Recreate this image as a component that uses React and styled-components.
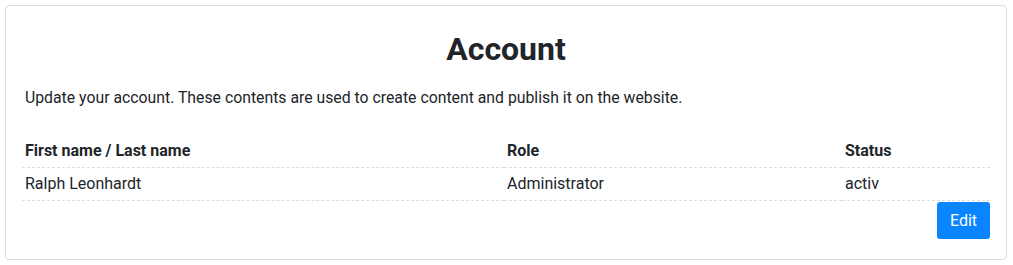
import React from 'react'
import styled, { createGlobalStyle } from 'styled-components'

const GlobalStyle = createGlobalStyle`
  body {
    margin: 0;
    background: #fff;
    font-family: Roboto, "Liberation Sans", sans-serif;
    color: #212529;
  }
`

const Page = styled.div`
  padding: 5px 6px 5px 5px;
`

const Card = styled.div`
  border: 1px solid #dcdcdc;
  border-radius: 4px;
  padding: 16px 16px 20px 16px;
  display: flex;
  flex-direction: column;
`

const Title = styled.h1`
  margin: 8px 0 0;
  text-align: center;
  font-size: 32px;
  font-weight: 700;
  line-height: 38px;
  color: #212529;
`

const Lead = styled.p`
  margin: 18px 0 0 3px;
  font-size: 15.8px;
  line-height: 24px;
`

const Table = styled.table`
  margin-top: 25px;
  width: 100%;
  border-collapse: collapse;
  table-layout: fixed;
  font-size: 16px;
`

const Th = styled.th`
  text-align: left;
  font-weight: 700;
  padding: 7px 3px;
  line-height: 18px;
  border-bottom: 1px dashed #dedede;
  width: ${p => p.$w || 'auto'};
`

const Td = styled.td`
  padding: 7px 3px;
  line-height: 18px;
  border-bottom: 1px dashed #dedede;
`

const Actions = styled.div`
  display: flex;
  justify-content: flex-end;
  margin-top: 1px;
`

const Button = styled.button`
  font-family: inherit;
  font-size: 16px;
  color: #fff;
  background: #0b84ff;
  border: none;
  border-radius: 3px;
  height: 37px;
  width: 53px;
  padding: 0;
  cursor: pointer;
`

export default function App() {
  return (
    <>
      <GlobalStyle />
      <Page>
        <Card>
          <Title>Account</Title>
          <Lead>Update your account. These contents are used to create content and publish it on the website.</Lead>
          <Table>
            <thead>
              <tr>
                <Th $w="476px">First name / Last name</Th>
                <Th $w="332px">Role</Th>
                <Th>Status</Th>
              </tr>
            </thead>
            <tbody>
              <tr>
                <Td>Ralph Leonhardt</Td>
                <Td>Administrator</Td>
                <Td>activ</Td>
              </tr>
            </tbody>
          </Table>
          <Actions>
            <Button>Edit</Button>
          </Actions>
        </Card>
      </Page>
    </>
  )
}
